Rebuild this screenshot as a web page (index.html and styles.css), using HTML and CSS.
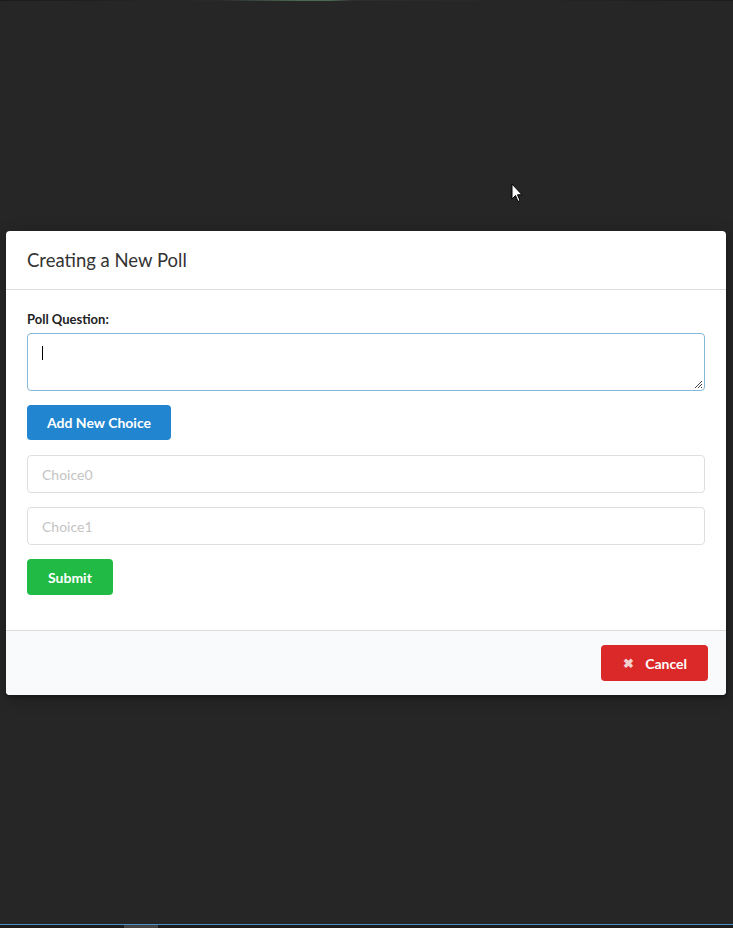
FILE: index.html
```html
<!DOCTYPE html>
<html>
<head>
<meta charset="utf-8">
<link rel="stylesheet" href="styles.css">
</head>
<body>
<div class="topedge"></div>
<div class="modal">
  <div class="modal-header">Creating a New Poll</div>
  <div class="modal-body">
    <label class="field-label">Poll Question:</label>
    <div class="textarea"><span class="caret"></span>
      <svg class="grip" width="10" height="10" viewBox="0 0 10 10"><path d="M9 2 L2 9 M9 5 L5 9 M9 8 L8 9" stroke="#444" stroke-width="1" fill="none"/></svg>
    </div>
    <button class="btn btn-blue">Add New Choice</button>
    <div class="input">Choice0</div>
    <div class="input">Choice1</div>
    <button class="btn btn-green">Submit</button>
  </div>
  <div class="modal-footer">
    <button class="btn btn-red"><span class="x">✖</span>Cancel</button>
  </div>
</div>
<svg class="cursor" width="14" height="22" viewBox="0 0 14 22"><path d="M1 1 L1 16 L4.5 12.5 L7 18.5 L9 17.5 L6.5 11.8 L11 11.8 Z" fill="#fff" stroke="#000" stroke-width="1"/></svg>
<div class="taskbar"><span class="tb-item"></span></div>
</body>
</html>
```
FILE: styles.css
```css
html, body { margin: 0; padding: 0; }
body {
  background: #262626;
  width: 733px;
  height: 928px;
  overflow: hidden;
  position: relative;
  font-family: Lato, "Open Sans", sans-serif;
}
.topedge {
  position: absolute; left: 0; top: 0; width: 733px; height: 1px;
  background: linear-gradient(90deg, #1a1a1a 0, #2a2a2a 30%, #4c6a55 41%, #4c6a55 45%, #2e2e2e 48%, #1c1c1c 100%);
}
.modal {
  margin: 231px 0 0 6px;
  width: 720px;
  background: #fff;
  border-radius: 4px;
  box-shadow: 1px 3px 3px 0 rgba(0,0,0,.2), 1px 3px 15px 2px rgba(0,0,0,.2);
  overflow: hidden;
}
.modal-header {
  height: 59px;
  box-sizing: border-box;
  padding: 0 21px;
  display: flex;
  align-items: center;
  font-size: 18.5px;
  color: #333;
  border-bottom: 1px solid #dcdcdd;
}
.modal-body {
  padding: 21px 21px 35px;
  display: flex;
  flex-direction: column;
  align-items: flex-start;
}
.field-label {
  font-size: 13px;
  font-weight: 700;
  color: #222;
  line-height: 16px;
  margin-bottom: 6px;
}
.textarea {
  position: relative;
  width: 678px;
  height: 58px;
  box-sizing: border-box;
  border: 1px solid #85b7d9;
  border-radius: 4px;
}
.caret {
  position: absolute; left: 14px; top: 12px; width: 1px; height: 14px; background: #000;
}
.grip { position: absolute; right: 1px; bottom: 1px; }
.btn {
  border: none;
  border-radius: 4px;
  font-family: Lato, "Open Sans", sans-serif;
  font-weight: 700;
  font-size: 14px;
  color: #fff;
  padding: 0 21px;
  height: 36px;
  cursor: pointer;
}
.btn-blue { background: #2185d0; margin-top: 14px; height: 35px; padding: 0 20px; }
.btn-green { background: #21ba45; margin-top: 14px; }
.btn-red { background: #db2828; height: 36px; padding: 0 21px 0 22px; display: flex; align-items: center; }
.x { color: #f2d0d0; font-size: 13px; margin-right: 11px; }
.input {
  width: 678px;
  height: 38px;
  box-sizing: border-box;
  border: 1px solid #dedede;
  border-radius: 4px;
  margin-top: 15px;
  padding-left: 14px;
  display: flex;
  align-items: center;
  font-size: 14px;
  color: #c4c4c4;
}
.input + .input { margin-top: 14px; }
.modal-footer {
  background: #f9fafb;
  border-top: 1px solid #dcdcdd;
  height: 50px;
  display: flex;
  justify-content: flex-end;
  align-items: flex-start;
  padding: 14px 18px 0 0;
}
.cursor { position: absolute; left: 511px; top: 183px; }
.taskbar {
  position: absolute; left: 0; top: 924px; width: 733px; height: 4px;
  border-top: 1px solid #4a90c8;
  box-sizing: border-box;
  background: #1c1c1c;
}
.tb-item { position: absolute; left: 124px; top: 0; width: 34px; height: 3px; background: #444; }
```
